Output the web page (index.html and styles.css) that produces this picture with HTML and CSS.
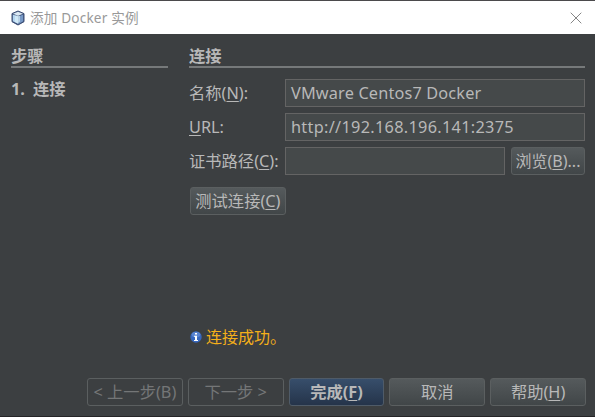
FILE: index.html
```html
<!DOCTYPE html>
<html lang="zh-CN">
<head>
<meta charset="utf-8">
<title>添加 Docker 实例</title>
<link rel="stylesheet" href="styles.css">
</head>
<body>
<div class="dialog">
  <header class="titlebar">
    <svg class="app-icon" viewBox="0 0 14 16">
      <path d="M7 1 13 3.6V11.7L7 15 1 11.7V3.6Z" fill="#3b4d75" stroke="#3b4d75" stroke-linejoin="round"/>
      <path d="M7 1.8 12 3.8 7 5.8 2 3.8Z" fill="#dce9f3"/>
      <path d="M1.8 4.6 7.5 6.6V14L1.8 11.2Z" fill="#b5d6f0"/>
      <path d="M7.5 6.6 12.2 4.6V11.2L7.5 14Z" fill="#7799c6"/>
      <path d="M4 5.4 9 5.8V11.4L6.6 13.4 4 12Z" fill="#dff2fa" opacity=".65"/>
    </svg>
    <h1 class="title">添加 Docker 实例</h1>
    <svg class="close" viewBox="0 0 12 12"><path d="M.7.7 11.3 11.3M11.3.7.7 11.3" stroke="#858585" fill="none"/></svg>
  </header>
  <main class="content">
    <aside class="steps">
      <h2 class="heading">步骤</h2>
      <div class="step"><span class="step-number">1.</span><span>连接</span></div>
    </aside>
    <section class="panel">
      <h2 class="heading">连接</h2>
      <div class="form">
        <div class="row"><label class="label">名称(<u>N</u>):</label><div class="field name">VMware Centos7 Docker</div></div>
        <div class="row"><label class="label"><u>U</u>RL:</label><div class="field url">http://192.168.196.141:2375</div></div>
        <div class="row"><label class="label">证书路径(<u>C</u>):</label><div class="field"></div><button class="button browse">浏览(<u>B</u>)...</button></div>
      </div>
      <button class="button test">测试连接(<u>C</u>)</button>
      <div class="message">
        <svg class="info" viewBox="0 0 12 12"><circle cx="6" cy="6" r="5.7" fill="#3767bd"/><ellipse cx="6" cy="3.6" rx="4.3" ry="2.9" fill="#6f98dc" opacity=".6"/><path d="M5 2h2v1.6H5zM4 4.7H7V9h1v1H4V9H5V5.8H4z" fill="#fff"/></svg>
        <span>连接成功。</span>
      </div>
    </section>
  </main>
  <footer class="actions">
    <button class="button disabled">&lt; 上一步(B)</button>
    <button class="button disabled next">下一步 &gt;</button>
    <button class="button primary">完成(<u>F</u>)</button>
    <button class="button">取消</button>
    <button class="button">帮助(<u>H</u>)</button>
  </footer>
</div>
</body>
</html>
```
FILE: styles.css
```css
* { box-sizing: border-box; }
body {
  margin: 0;
  font: 16.3px/20px "Noto Sans", "Noto Sans CJK SC", sans-serif;
  color: #b8b8b8;
}
.dialog {
  width: 595px;
  height: 417px;
  background: #3c3f41;
  border-top: 1px solid #4b4a4c;
  border-bottom: 1px solid #242426;
  display: flex;
  flex-direction: column;
  overflow: hidden;
}
.titlebar {
  height: 33px;
  flex: none;
  display: flex;
  align-items: center;
  padding: 0 13px 0 11px;
  background: #fff;
}
.app-icon { width: 14px; height: 16px; margin-right: 5px; }
.title { flex: 1; margin: 0; font-size: 13.6px; letter-spacing: .17px; font-weight: 400; color: #999; white-space: pre; }
.close { width: 12px; height: 12px; }
.content { flex: 1; display: flex; gap: 21px; padding: 12px 10px 0 11px; }
.steps { width: 157px; }
.panel { flex: 1; display: flex; flex-direction: column; }
.heading {
  height: 22px;
  margin: 0;
  font-size: 16.3px;
  line-height: 21px;
  font-weight: 700;
  border-bottom: 2px solid #76797a;
}
.step { display: flex; gap: 8px; margin-top: 11px; font-weight: 700; }
.step-number { width: 14px; }
.form { display: flex; flex-direction: column; gap: 6px; margin-top: 11px; }
.row { display: flex; height: 28px; align-items: center; }
.label { width: 96px; flex: none; white-space: nowrap; }
.field {
  flex: 1;
  height: 28px;
  padding: 0 5px;
  line-height: 26px;
  background: #45494a;
  border: 1px solid #646464;
  white-space: nowrap;
}
.name { letter-spacing: .16px; }
.url { letter-spacing: .3px; }
u { text-decoration-thickness: 1px; text-underline-offset: 2px; text-decoration-skip-ink: none; }
.button {
  height: 28px;
  width: 95.8px;
  padding: 0;
  font: inherit;
  line-height: 24px;
  color: #b8b8b8;
  white-space: nowrap;
  background: linear-gradient(#555a5c, #414648);
  border: 1px solid #5b5f60;
  border-radius: 3px;
}
.browse { width: 74px; margin-left: 6px; font-size: 16px; }
.test { margin: 12px 0 0 1px; }
.message { display: flex; align-items: center; gap: 4px; margin: 112px 0 0 1px; font-size: 16px; color: #f5b01a; }
.info { width: 12px; height: 12px; }
.actions { height: 38px; flex: none; display: flex; justify-content: flex-end; gap: 5px; padding-right: 9px; }
.actions .disabled { background: none; color: #747677; }
.primary { background: linear-gradient(#374e6b, #25344a); border-color: #4f5b68; font-weight: 700; }
```
